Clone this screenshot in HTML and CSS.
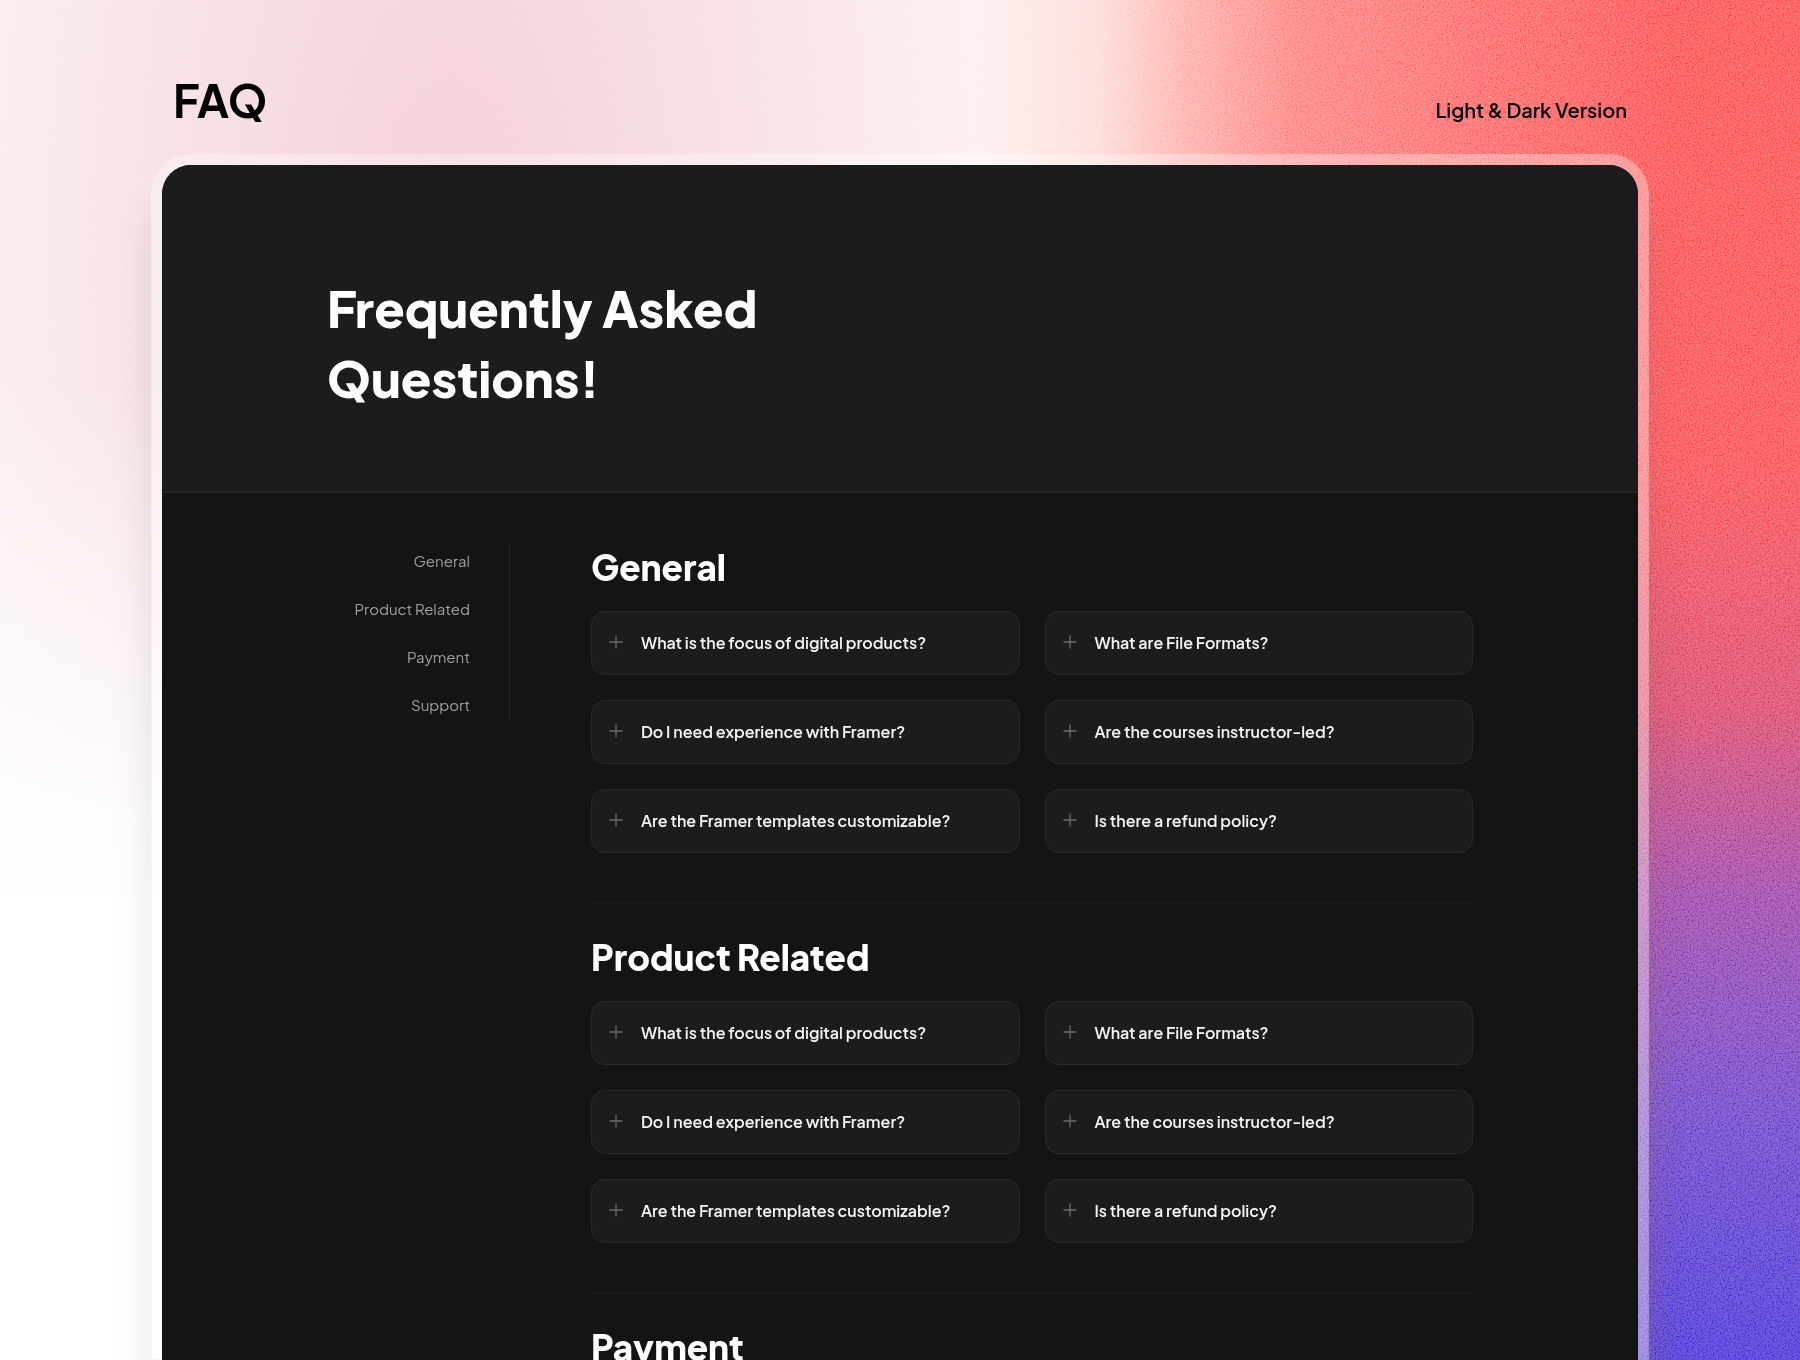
FILE: index.html
```html
<!DOCTYPE html>
<html lang="en">
<head>
<meta charset="utf-8">
<meta name="viewport" content="width=device-width, initial-scale=1">
<title>FAQ</title>
<link rel="stylesheet" href="styles.css">
</head>
<body>
<svg class="grain" aria-hidden="true">
  <filter id="noise" x="0" y="0" width="100%" height="100%">
    <feTurbulence type="fractalNoise" baseFrequency="0.6" numOctaves="3" seed="4"/>
    <feColorMatrix type="matrix" values="2.4 0 0 0 -0.75  2.4 0 0 0 -0.75  2.4 0 0 0 -0.75  0 0 0 0 1"/>
  </filter>
  <rect width="100%" height="100%" filter="url(#noise)"/>
</svg>
<svg class="sprite" aria-hidden="true">
  <symbol id="plus" viewBox="0 0 14 14"><path d="M7 0.5V13.5M0.5 7H13.5" fill="none" stroke="currentColor" stroke-width="1.3"/></symbol>
</svg>
<div class="page">
  <header class="topbar">
    <p class="brand">FAQ</p>
    <p class="version">Light &amp; Dark Version</p>
  </header>
  <main class="panel">
    <div class="hero">
      <h1>Frequently Asked<br>Questions!</h1>
    </div>
    <div class="content">
      <nav class="side" aria-label="Sections">
        <a href="#general">General</a>
        <a href="#product">Product Related</a>
        <a href="#payment">Payment</a>
        <a href="#payment">Support</a>
      </nav>
      <div class="sections">
        <section id="general">
          <h2>General</h2>
          <div class="grid">
            <button class="card"><svg><use href="#plus"/></svg>What is the focus of digital products?</button>
            <button class="card"><svg><use href="#plus"/></svg>What are File Formats?</button>
            <button class="card"><svg><use href="#plus"/></svg>Do I need experience with Framer?</button>
            <button class="card"><svg><use href="#plus"/></svg>Are the courses instructor-led?</button>
            <button class="card"><svg><use href="#plus"/></svg>Are the Framer templates customizable?</button>
            <button class="card"><svg><use href="#plus"/></svg>Is there a refund policy?</button>
          </div>
        </section>
        <section id="product">
          <h2>Product Related</h2>
          <div class="grid">
            <button class="card"><svg><use href="#plus"/></svg>What is the focus of digital products?</button>
            <button class="card"><svg><use href="#plus"/></svg>What are File Formats?</button>
            <button class="card"><svg><use href="#plus"/></svg>Do I need experience with Framer?</button>
            <button class="card"><svg><use href="#plus"/></svg>Are the courses instructor-led?</button>
            <button class="card"><svg><use href="#plus"/></svg>Are the Framer templates customizable?</button>
            <button class="card"><svg><use href="#plus"/></svg>Is there a refund policy?</button>
          </div>
        </section>
        <section id="payment">
          <h2>Payment</h2>
        </section>
      </div>
    </div>
  </main>
</div>
</body>
</html>
```

FILE: styles.css
```css
* { box-sizing: border-box; }

body {
  margin: 0;
  font-family: "Plus Jakarta Sans", Inter, "Liberation Sans", sans-serif;
  background:
    linear-gradient(to bottom, rgba(255, 255, 255, 0) 28%, #fff 66%) left / 50% 100% no-repeat,
    radial-gradient(ellipse 30% 85% at 25% 18%, rgba(238, 185, 196, 0.6), rgba(240, 190, 200, 0) 100%),
    linear-gradient(90deg, #fcf3f3 0%, #fdf1f0 54%, rgba(254, 226, 223, 0.98) 61%, rgba(255, 190, 186, 0.92) 66%, rgba(255, 150, 148, 0.88) 72%, rgba(255, 125, 125, 0.75) 82%, rgba(255, 110, 110, 0) 93%),
    linear-gradient(to bottom, #ff6060 0%, #fd5f62 33%, #e0597a 52%, #a656b2 66%, #7a54d0 82%, #5846dc 100%);
}

.grain {
  position: fixed;
  inset: 0;
  width: 100%;
  height: 100%;
  opacity: 0.42;
  mix-blend-mode: soft-light;
  -webkit-mask-image: linear-gradient(to right, rgba(0, 0, 0, 0.25) 40%, #000 85%);
  mask-image: linear-gradient(to right, rgba(0, 0, 0, 0.25) 40%, #000 85%);
}

.sprite { display: none; }

.page {
  position: relative;
  display: flex;
  flex-direction: column;
  height: 100vh;
  padding: 70px 151px 0;
  overflow: hidden;
}

.topbar {
  display: flex;
  align-items: baseline;
  justify-content: space-between;
  padding: 0 22px;
  height: 84px;
  flex: none;
}

.topbar p { margin: 0; color: #000; }
.topbar .brand { font-size: 45px; line-height: 60px; font-weight: 700; }
.topbar .version { font-size: 20px; line-height: 30px; font-weight: 600; }

.panel {
  flex: 1;
  min-height: 0;
  overflow: hidden;
  border: 11px solid rgba(255, 255, 255, 0.34);
  border-bottom: 0;
  border-radius: 40px 40px 0 0;
  background: #141414;
  background-clip: padding-box;
  box-shadow: 0 48px 44px rgba(0, 0, 0, 0.1);
}

.hero {
  padding: 108px 165px 78px;
  background: #1c1c1c;
  border-bottom: 2px solid #242424;
}

h1 {
  margin: 0;
  font-size: 50px;
  line-height: 70px;
  font-weight: 800;
  color: #fff;
}

.content {
  display: flex;
  align-items: flex-start;
  gap: 81px;
  padding: 50px 165px;
}

.side {
  flex: none;
  width: 183px;
  display: flex;
  flex-direction: column;
  align-items: flex-end;
  gap: 24px;
  padding: 6px 39px 6px 0;
  border-right: 1px solid #242424;
}

.side a {
  font-size: 15px;
  line-height: 24px;
  color: #a0a0a0;
  text-decoration: none;
  white-space: nowrap;
}

.sections { flex: 1; min-width: 0; }

section + section {
  padding-top: 29px;
  border-top: 2px solid #1b1b1b;
}

h2 {
  margin: 0 0 20px;
  font-size: 35px;
  line-height: 48px;
  font-weight: 800;
  color: #fff;
}

.grid {
  display: grid;
  grid-template-columns: 1fr 1fr;
  gap: 25px;
  padding-bottom: 49px;
}

.card {
  display: flex;
  align-items: center;
  gap: 18px;
  height: 64px;
  padding: 0 17px 2px;
  border: 1px solid #2a2a2a;
  border-radius: 14px;
  background: #1c1c1c;
  color: #f5f5f5;
  font: inherit;
  font-size: 16px;
  font-weight: 600;
  text-align: left;
  white-space: nowrap;
}

.card svg { width: 14px; height: 14px; flex: none; color: #6c6c6c; }
```
